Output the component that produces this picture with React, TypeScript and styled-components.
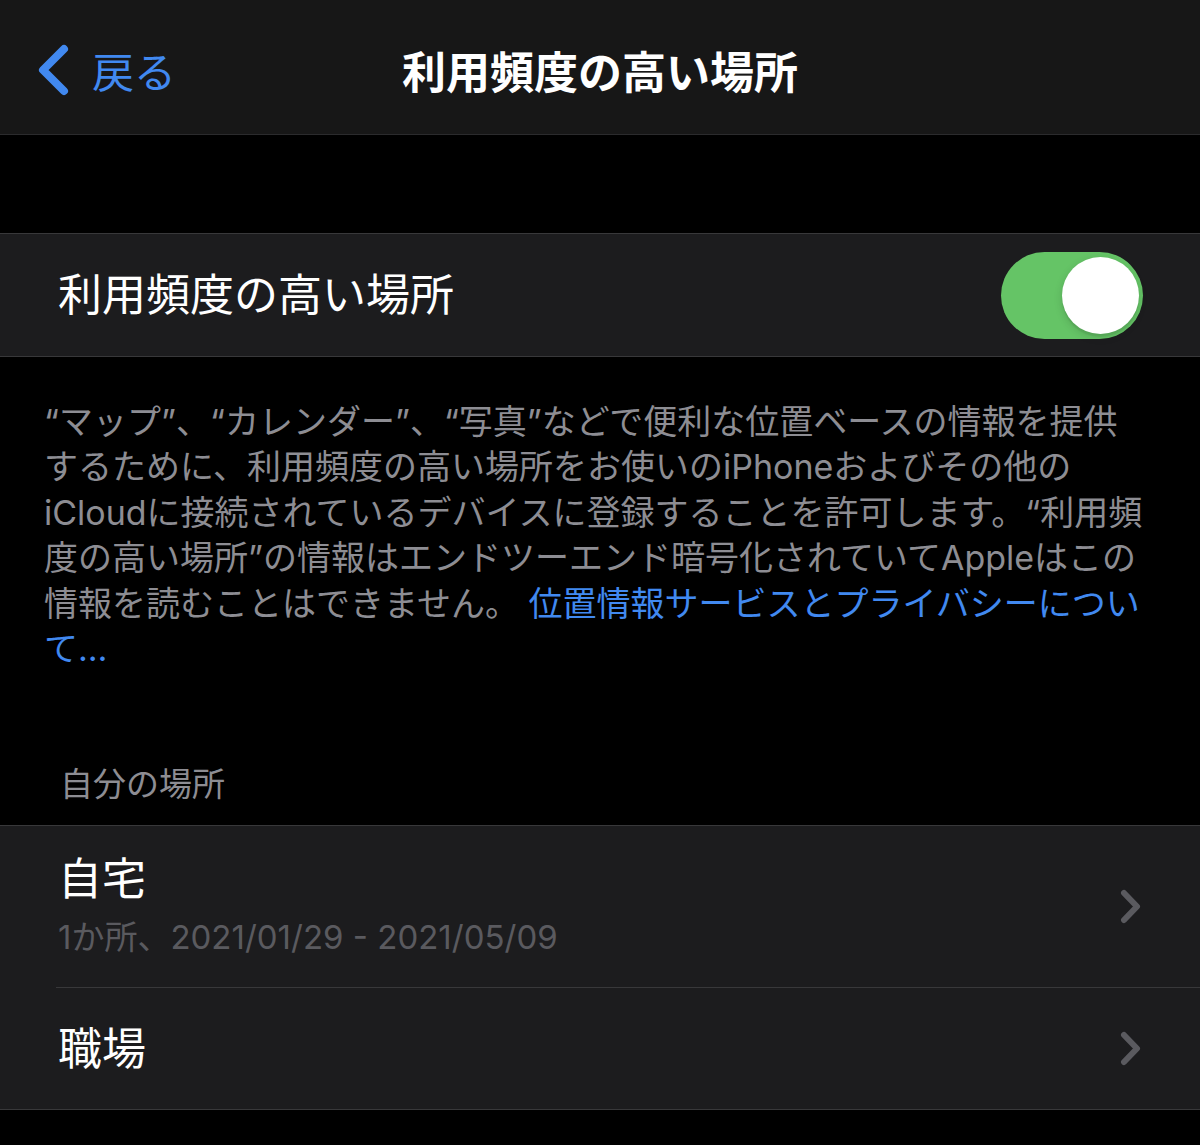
import React from 'react';
import styled, { createGlobalStyle } from 'styled-components';

const GlobalStyle = createGlobalStyle`
  html, body {
    margin: 0;
    padding: 0;
    background: #000;
  }
  body {
    font-family: "Inter", "Noto Sans CJK JP", sans-serif;
    -webkit-font-smoothing: antialiased;
  }
`;

const Page = styled.div`
  width: 1200px;
  min-height: 1145px;
  background: #000;
  display: flex;
  flex-direction: column;
`;

const NavBar = styled.header`
  height: 135px;
  box-sizing: border-box;
  padding-top: 6px;
  background: #171717;
  border-bottom: 1px solid #2b2b2d;
  display: grid;
  grid-template-columns: 1fr auto 1fr;
  align-items: center;
`;

const BackButton = styled.button`
  display: flex;
  align-items: center;
  gap: 22px;
  padding: 0 0 0 36px;
  background: none;
  border: none;
  color: #4189f0;
  font-family: inherit;
  font-size: 42px;
  line-height: 1;
  cursor: pointer;
  justify-self: start;
`;

const BackLabel = styled.span`
  padding-top: 6px;
`;

const NavTitle = styled.h1`
  margin: 0;
  color: #fff;
  font-size: 44px;
  font-weight: 700;
  letter-spacing: 0;
`;

const GroupGap = styled.div`
  height: 98px;
`;

const Group = styled.section`
  background: #1c1c1e;
  border-top: 1px solid #38383a;
  border-bottom: 1px solid #38383a;
`;

const ToggleRow = styled.div`
  height: 122px;
  display: flex;
  align-items: center;
  justify-content: space-between;
  padding: 0 57px 0 58px;
`;

const RowLabel = styled.span`
  color: #fff;
  font-size: 44px;
  line-height: 52px;
`;

const Switch = styled.div<{ on: boolean }>`
  width: 142px;
  height: 87px;
  box-sizing: border-box;
  border-radius: 44px;
  padding: 5px 4px;
  background: ${(p) => (p.on ? '#65c466' : '#39393d')};
  display: flex;
  justify-content: ${(p) => (p.on ? 'flex-end' : 'flex-start')};
  align-items: center;
`;

const Knob = styled.div`
  width: 77px;
  height: 77px;
  border-radius: 50%;
  background: #fff;
  box-shadow: 0 3px 8px rgba(0, 0, 0, 0.15), 0 3px 1px rgba(0, 0, 0, 0.06);
`;

const Footer = styled.p`
  margin: 0;
  padding: 42px 44px 0 44px;
  color: #8d8d93;
  font-size: 34px;
  line-height: 45.4px;
  white-space: nowrap;
`;

const Link = styled.span`
  color: #4189f0;
`;

const SectionHeader = styled.h2`
  margin: 93px 0 21px 0;
  padding-left: 60px;
  color: #8d8d93;
  font-size: 33px;
  font-weight: 400;
  line-height: 40px;
`;

const Row = styled.div`
  padding-left: 56px;
`;

const RowInner = styled.div<{ last?: boolean; tall?: boolean }>`
  display: flex;
  align-items: center;
  justify-content: space-between;
  padding: ${(p) => (p.tall ? '27px 59px 28px 2px' : '0 59px 0 2px')};
  height: ${(p) => (p.tall ? 'auto' : '121px')};
  box-sizing: border-box;
  border-bottom: ${(p) => (p.last ? 'none' : '1px solid #38383a')};
`;

const RowText = styled.div`
  display: flex;
  flex-direction: column;
  gap: 10px;
`;

const RowSub = styled.span`
  color: #5a5a5f;
  font-size: 33px;
  line-height: 44px;
`;

const BackChevron = () => (
  <svg width="34" height="52" viewBox="0 0 34 52" fill="none">
    <path d="M28 5 L7 26 L28 47" stroke="#4189f0" strokeWidth="8" strokeLinecap="round" strokeLinejoin="round" />
  </svg>
);

const Disclosure = () => (
  <svg width="21" height="35" viewBox="0 0 21 35" fill="none">
    <path d="M4 4 L17 17.5 L4 31" stroke="#5a5a5f" strokeWidth="6" strokeLinecap="round" strokeLinejoin="round" />
  </svg>
);

const App = () => {
  return (
    <Page>
      <GlobalStyle />
      <NavBar>
        <BackButton>
          <BackChevron />
          <BackLabel>戻る</BackLabel>
        </BackButton>
        <NavTitle>利用頻度の高い場所</NavTitle>
        <div />
      </NavBar>

      <GroupGap />

      <Group>
        <ToggleRow>
          <RowLabel>利用頻度の高い場所</RowLabel>
          <Switch on={true}>
            <Knob />
          </Switch>
        </ToggleRow>
      </Group>

      <Footer>
        “マップ”、“カレンダー”、“写真”などで便利な位置ベースの情報を提供
        <br />
        するために、利用頻度の高い場所をお使いのiPhoneおよびその他の
        <br />
        iCloudに接続されているデバイスに登録することを許可します。“利用頻
        <br />
        度の高い場所”の情報はエンドツーエンド暗号化されていてAppleはこの
        <br />
        情報を読むことはできません。{' '}
        <Link>
          位置情報サービスとプライバシーについ
          <br />
          て…
        </Link>
      </Footer>

      <SectionHeader>自分の場所</SectionHeader>

      <Group>
        <Row>
          <RowInner tall>
            <RowText>
              <RowLabel>自宅</RowLabel>
              <RowSub>1か所、2021/01/29 - 2021/05/09</RowSub>
            </RowText>
            <Disclosure />
          </RowInner>
        </Row>
        <Row>
          <RowInner last>
            <RowLabel>職場</RowLabel>
            <Disclosure />
          </RowInner>
        </Row>
      </Group>
    </Page>
  );
};

export default App;
